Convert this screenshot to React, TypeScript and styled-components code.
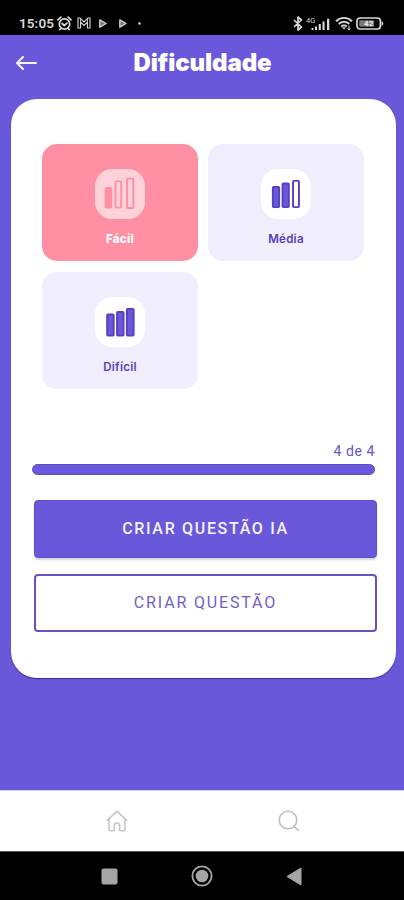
import React from 'react';
import styled, { createGlobalStyle } from 'styled-components';

const PURPLE = '#6a58db';
const DEEP = '#5540c4';
const PINK = '#ff8fa2';

const GlobalStyle = createGlobalStyle`
  *, *::before, *::after { box-sizing: border-box; }
  body { margin: 0; background: ${PURPLE}; font-family: Roboto, "Liberation Sans", sans-serif; }
  button { font: inherit; cursor: pointer; padding: 0; }
  svg { display: block; flex: none; }
`;

const Screen = styled.div`
  width: 404px;
  height: 900px;
  display: flex;
  flex-direction: column;
  background: ${PURPLE};
  overflow: hidden;
`;

const StatusBar = styled.div`
  height: 35px;
  flex: none;
  padding: 11px 20px 0 19px;
  display: flex;
  justify-content: space-between;
  background: #000;
  color: #d8d8d8;
`;

const StatusGroup = styled.div<{ $gap: number }>`
  display: flex;
  align-items: center;
  height: 24px;
  gap: ${({ $gap }) => $gap}px;
`;

const Clock = styled.span`
  font-size: 13.5px;
  font-weight: 600;
  line-height: 24px;
  letter-spacing: 0.1px;
  width: 36px;
  white-space: nowrap;
`;

const Header = styled.header`
  height: 64px;
  flex: none;
  display: grid;
  grid-template-columns: 52px 1fr 52px;
  align-items: start;
`;

const BackButton = styled.button`
  height: 55px;
  padding-left: 15px;
  display: flex;
  align-items: center;
  border: 0;
  background: none;
`;

const Title = styled.h1`
  margin: 0;
  padding-left: 1px;
  text-align: center;
  color: #fff;
  font-family: Inter, Roboto, sans-serif;
  font-size: 24px;
  font-weight: 900;
  letter-spacing: -0.1px;
  line-height: 55px;
`;

const Card = styled.main`
  height: 579px;
  flex: none;
  margin: 0 8px 0 11px;
  padding: 44.5px 19px 0 21px;
  display: flex;
  flex-direction: column;
  border-radius: 26px;
  background: #fff;
  box-shadow: 0 1px 1px rgba(40, 25, 120, 0.75);
`;

const Tiles = styled.div`
  display: grid;
  grid-template-columns: 156px 156px;
  grid-auto-rows: 117.5px;
  gap: 10.5px 10px;
  padding-left: 10px;
`;

const Tile = styled.button<{ $active?: boolean }>`
  display: flex;
  flex-direction: column;
  align-items: center;
  padding-top: 25.5px;
  gap: 11px;
  border: 0;
  border-radius: 15px;
  background: ${({ $active }) => ($active ? PINK : '#f0edfc')};
  color: ${({ $active }) => ($active ? '#fff' : DEEP)};
`;

const IconBox = styled.span<{ $active?: boolean }>`
  width: 50px;
  height: 50px;
  border-radius: 17px;
  background: ${({ $active }) => ($active ? '#ffd2da' : '#fff')};
`;

const TileLabel = styled.span<{ $active?: boolean }>`
  font-family: Inter, Roboto, sans-serif;
  font-size: 11.5px;
  line-height: 18px;
  font-weight: ${({ $active }) => ($active ? 800 : 600)};
  letter-spacing: 0.3px;
`;

const Progress = styled.section`
  margin-top: 53px;
  padding-right: 2px;
`;

const ProgressLabel = styled.div`
  height: 22px;
  line-height: 18px;
  text-align: right;
  font-size: 14px;
  letter-spacing: 0.6px;
  color: #6654cf;
`;

const Track = styled.div`
  height: 10.5px;
  border-radius: 6px;
  background: ${PURPLE};
  border: 1px solid #5c4ac8;
`;

const Actions = styled.div`
  display: grid;
  grid-auto-rows: 58px;
  gap: 16px;
  margin: 25px 0 0 2px;
  width: 343px;
`;

const ActionButton = styled.button<{ $outlined?: boolean }>`
  border-radius: 4px;
  border: ${({ $outlined }) => ($outlined ? '2px solid #6452c6' : '1px solid #604ed0')};
  background: ${({ $outlined }) => ($outlined ? '#fff' : PURPLE)};
  color: ${({ $outlined }) => ($outlined ? '#6f5fc8' : '#f4f2ff')};
  font-size: 16px;
  font-weight: ${({ $outlined }) => ($outlined ? 400 : 500)};
  letter-spacing: ${({ $outlined }) => ($outlined ? 1.85 : 1.68)}px;
  box-shadow: ${({ $outlined }) => ($outlined ? 'none' : '0 2px 2px rgba(60, 60, 90, 0.22)')};
`;

const TabBar = styled.nav`
  height: 61px;
  flex: none;
  margin-top: auto;
  padding: 0 29px 0 31px;
  display: grid;
  grid-template-columns: 1fr 1fr;
  place-items: center;
  background: #fff;
  border-top: 1px solid #d9d4f7;
`;

const SystemBar = styled.div`
  height: 49px;
  flex: none;
  padding-right: 1px;
  display: flex;
  align-items: center;
  justify-content: center;
  gap: 73px;
  background: #000;
  border-top: 1px solid #555;
`;

type Bar = { x: number; y: number; w: number; h: number; filled: boolean };

const levels: { label: string; active?: boolean; bars: Bar[] }[] = [
  {
    label: 'Fácil',
    active: true,
    bars: [
      { x: 9.7, y: 18, w: 7.4, h: 21.5, filled: true },
      { x: 19.7, y: 11.5, w: 7.3, h: 28, filled: false },
      { x: 31.2, y: 8.8, w: 8, h: 31, filled: false },
    ],
  },
  {
    label: 'Média',
    bars: [
      { x: 11, y: 17, w: 8, h: 22, filled: true },
      { x: 20.7, y: 13.7, w: 8, h: 25.3, filled: true },
      { x: 31.2, y: 11, w: 7.6, h: 28, filled: false },
    ],
  },
  {
    label: 'Difícil',
    bars: [
      { x: 11.3, y: 16.7, w: 8.2, h: 22.8, filled: true },
      { x: 21.2, y: 14, w: 8.2, h: 25.5, filled: true },
      { x: 31, y: 11, w: 8.5, h: 28.5, filled: true },
    ],
  },
];

function BarsIcon({ bars, active }: { bars: Bar[]; active?: boolean }) {
  const stroke = active ? PINK : DEEP;
  const fill = active ? PINK : PURPLE;
  return (
    <svg width="50" height="50" viewBox="0 0 50 50">
      {bars.map((b) => (
        <rect
          key={b.x}
          x={b.x + 0.85}
          y={b.y + 0.85}
          width={b.w - 1.7}
          height={b.h - 1.7}
          rx="0.8"
          fill={b.filled ? fill : 'none'}
          stroke={stroke}
          strokeWidth="1.9"
        />
      ))}
    </svg>
  );
}

const AlarmIcon = () => (
  <svg width="15" height="15" viewBox="0 0 15 15" fill="none" stroke="currentColor" strokeWidth="1.7" strokeLinecap="round">
    <circle cx="7.5" cy="8" r="5.2" />
    <path d="M1 3.8 3.8 1.2M14 3.8 11.2 1.2M5 7.5l2.2 2 2.8-2.4M3.7 12.5l-1 1.2M11.3 12.5l1 1.2" />
  </svg>
);

const MailIcon = () => (
  <svg width="14" height="12" viewBox="0 0 14 12" fill="none" stroke="currentColor">
    <path d="M1 11V1h2l4 4 4-4h2v10h-2.6V5.2L7 8.4 3.6 5.2V11Z" strokeWidth="1.1" />
    <path d="M3.5 1v10M10.5 1v10" strokeWidth=".8" />
  </svg>
);

const PlayIcon = () => (
  <svg width="8" height="9" viewBox="0 0 8 9">
    <path d="M.8.8 7 4.5.8 8.2Z" fill="#777" stroke="currentColor" strokeWidth="1.3" strokeLinejoin="round" />
  </svg>
);

const DotIcon = () => (
  <svg width="3" height="3" viewBox="0 0 3 3">
    <circle cx="1.5" cy="1.5" r="1.2" fill="currentColor" />
  </svg>
);

const BluetoothIcon = () => (
  <svg width="10" height="15" viewBox="0 0 10 15" fill="none" stroke="currentColor" strokeWidth="1.7" strokeLinejoin="round">
    <path d="m1 4 7.4 7L5 14V1l3.4 3L1 11" />
  </svg>
);

const SignalIcon = () => (
  <svg width="25" height="15" viewBox="0 0 25 15" fill="currentColor">
    <text x="0" y="6.5" fontSize="7.5" fontFamily="Roboto, sans-serif">4G</text>
    <path d="M5.5 12h2v2h-2zM9 10.5h2V14H9zM12.7 8h2.1v6h-2.1zM16.5 5.5h2.1V14h-2.1zM21 2.7h2.3V14H21z" />
  </svg>
);

const WifiIcon = () => (
  <svg width="18" height="15" viewBox="0 0 18 15" fill="none" stroke="currentColor" strokeWidth="1.9">
    <path d="M1 5.3C5.5.7 12.5.7 17 5.3M3.7 8c3-3.1 7.6-3.1 10.6 0M6.2 10.6c1.6-1.6 4-1.6 5.6 0" />
    <path d="m7 11.2 2 2.3 2-2.3Z" fill="currentColor" stroke="none" />
    <path d="M14 9.5V14M12.5 12.6 14 14l1.5-1.4" strokeWidth="1" />
  </svg>
);

const BatteryIcon = () => (
  <svg width="28" height="13" viewBox="0 0 28 13">
    <rect x="1" y="1" width="23.4" height="11" rx="3" fill="none" stroke="currentColor" strokeWidth="1.7" />
    <rect x="3.2" y="3.2" width="15" height="6.6" rx="1" fill="#777" />
    <path d="M25.6 4.2c2.2.3 2.2 4.2 0 4.5Z" fill="currentColor" />
    <text x="12.7" y="9.4" textAnchor="middle" fontSize="8" fontWeight="700" fontFamily="Roboto, sans-serif" fill="#eee">42</text>
  </svg>
);

const BackIcon = () => (
  <svg width="22" height="16" viewBox="0 0 22 16" fill="none" stroke="#f5f3ff" strokeWidth="2" strokeLinecap="round" strokeLinejoin="round">
    <path d="M21 8H2M8 2 2 8l6 6" />
  </svg>
);

const HomeIcon = () => (
  <svg width="22" height="22" viewBox="0 0 22 22" fill="none" stroke="#c6c6c6" strokeWidth="1.6" strokeLinejoin="round" strokeLinecap="round">
    <path d="M1.3 10.2 11 1.3l9.7 8.9M3 9v10.5q0 1.3 1.3 1.3h4V16q0-3 2.7-3t2.7 3v4.8h4q1.3 0 1.3-1.3V9" />
  </svg>
);

const SearchIcon = () => (
  <svg width="22" height="22" viewBox="0 0 22 22" fill="none" stroke="#bdbdbd" strokeWidth="1.6" strokeLinecap="round">
    <circle cx="10" cy="10" r="8.8" />
    <path d="m16 16.3 4.5 4.2" />
  </svg>
);

export default function App() {
  return (
    <>
      <GlobalStyle />
      <Screen>
        <StatusBar>
          <StatusGroup $gap={11.5}>
            <StatusGroup $gap={8}>
              <StatusGroup $gap={2}>
                <Clock>15:05</Clock>
                <StatusGroup $gap={5}>
                  <AlarmIcon />
                  <MailIcon />
                </StatusGroup>
              </StatusGroup>
              <PlayIcon />
            </StatusGroup>
            <PlayIcon />
            <DotIcon />
          </StatusGroup>
          <StatusGroup $gap={3.5}>
            <BluetoothIcon />
            <SignalIcon />
            <WifiIcon />
            <BatteryIcon />
          </StatusGroup>
        </StatusBar>
        <Header>
          <BackButton aria-label="Voltar">
            <BackIcon />
          </BackButton>
          <Title>Dificuldade</Title>
        </Header>
        <Card>
          <Tiles>
            {levels.map(({ label, active, bars }) => (
              <Tile key={label} $active={active}>
                <IconBox $active={active}>
                  <BarsIcon bars={bars} active={active} />
                </IconBox>
                <TileLabel $active={active}>{label}</TileLabel>
              </Tile>
            ))}
          </Tiles>
          <Progress>
            <ProgressLabel>4 de 4</ProgressLabel>
            <Track />
          </Progress>
          <Actions>
            <ActionButton>CRIAR QUESTÃO IA</ActionButton>
            <ActionButton $outlined>CRIAR QUESTÃO</ActionButton>
          </Actions>
        </Card>
        <TabBar>
          <HomeIcon />
          <SearchIcon />
        </TabBar>
        <SystemBar>
          <svg width="17" height="17" viewBox="0 0 17 17">
            <rect x=".5" y=".5" width="16" height="16" rx="2" fill="#a5a5a5" />
          </svg>
          <svg width="22" height="22" viewBox="0 0 22 22">
            <circle cx="11" cy="11" r="9.6" fill="none" stroke="#a5a5a5" strokeWidth="1.8" />
            <circle cx="11" cy="11" r="6.3" fill="#a5a5a5" />
          </svg>
          <svg width="16" height="19" viewBox="0 0 16 19">
            <path d="M15 1v17L1 9.5Z" fill="#a5a5a5" stroke="#a5a5a5" strokeLinejoin="round" />
          </svg>
        </SystemBar>
      </Screen>
    </>
  );
}
